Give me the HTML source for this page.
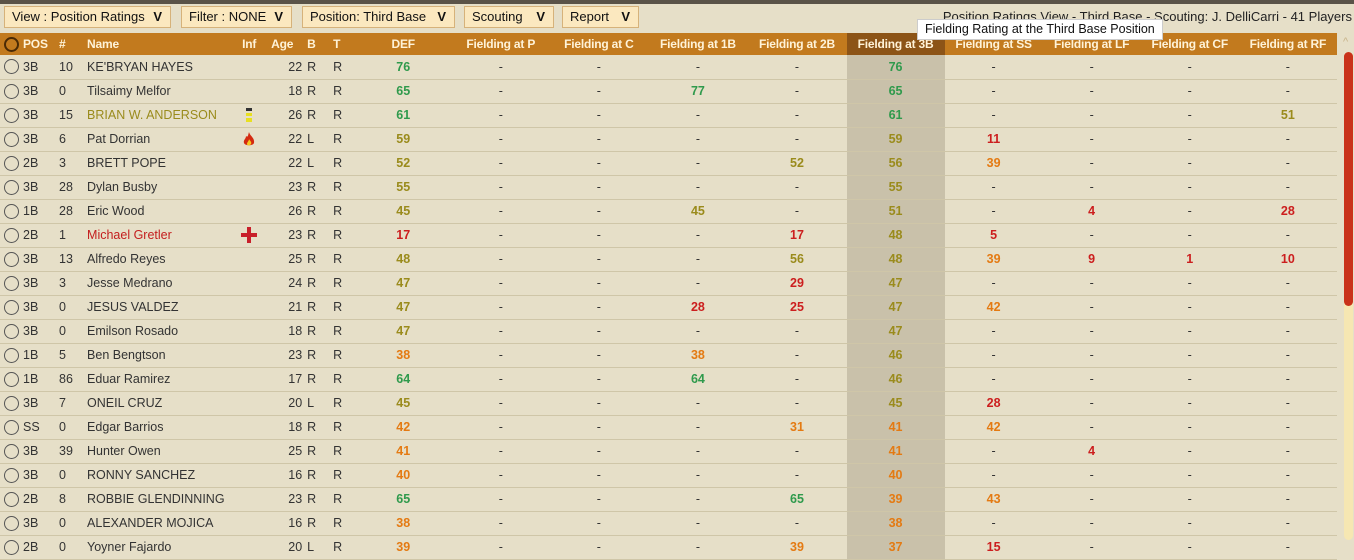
<!DOCTYPE html>
<html><head><meta charset="utf-8"><style>
*{margin:0;padding:0;box-sizing:border-box}
body{width:1354px;height:556px;overflow:hidden;background:#e6dfc8;font-family:"Liberation Sans",sans-serif;font-size:12.5px;color:#222;position:relative}
.strip{position:absolute;left:0;top:0;width:1354px;height:4px;background:#5a5348}
.btn{position:absolute;top:6px;height:22px;background:#fbe8bf;border:1px solid #d6b27a;font-size:13px;color:#111;line-height:20px;padding-left:7px;white-space:nowrap}
.btn b{position:absolute;right:8px;top:0;font-weight:bold}
.info{position:absolute;right:2px;top:9px;font-size:13px;color:#222;white-space:nowrap}
.tip{position:absolute;left:917px;top:19px;width:246px;height:21px;background:#fff;border:1px solid #ccc;font-size:12.5px;line-height:19px;padding-left:7px;color:#111;white-space:nowrap;overflow:hidden}
table{position:absolute;left:0;top:33px;border-collapse:collapse;table-layout:fixed;width:1337px}
th{height:22px;background:#c27a1e;color:#fff3d8;font-weight:bold;font-size:12px;letter-spacing:-0.2px;text-align:center;padding:0;white-space:nowrap;overflow:hidden}
th.l{text-align:left;padding-left:3px}
th.hl{background:#8c5417}
td{height:24px;padding:0;border-bottom:1px solid #cfc6a8;text-align:center;color:#333;white-space:nowrap}
td.l{text-align:left;padding-left:3px}
td.r{text-align:right;padding-right:2px}
td.hl{background:#c9c1aa}
.g{color:#2f9a4c;font-weight:bold}.o{color:#9a8b1c;font-weight:bold}.n{color:#e47a12;font-weight:bold}.x{color:#cc1e1e;font-weight:bold}
.rad{display:inline-block;width:15px;height:15px;border:1.5px solid #555;border-radius:50%;vertical-align:middle;margin-left:2px}
th .rad{border-color:#4a2a05;border-width:2px}
.scroll{position:absolute;left:1344px;top:52px;width:9px;height:488px;background:#f6e7b2;border-radius:5px}
.thumb{position:absolute;left:1344px;top:52px;width:9px;height:254px;background:#c9321a;border-radius:5px}
</style></head><body>
<div class="strip"></div>
<div class="btn" style="left:4px;width:167px">View : Position Ratings<b>V</b></div>
<div class="btn" style="left:181px;width:111px">Filter : NONE<b>V</b></div>
<div class="btn" style="left:302px;width:153px">Position: Third Base<b>V</b></div>
<div class="btn" style="left:464px;width:90px">Scouting<b>V</b></div>
<div class="btn" style="left:562px;width:77px">Report<b>V</b></div>
<div class="info">Position Ratings View - Third Base - Scouting: J. DelliCarri - 41 Players</div>
<table>
<colgroup><col style="width:20px"><col style="width:36px"><col style="width:28px"><col style="width:146px"><col style="width:38px"><col style="width:36px"><col style="width:26px"><col style="width:24px"><col style="width:98px"><col style="width:97px"><col style="width:99px"><col style="width:99px"><col style="width:99px"><col style="width:98px"><col style="width:98px"><col style="width:98px"><col style="width:98px"><col style="width:98px"></colgroup>
<tr><th><span class="rad"></span></th><th class="l">POS</th><th class="l">#</th><th class="l">Name</th><th>Inf</th><th class="l">Age</th><th class="l">B</th><th class="l">T</th><th>DEF</th><th>Fielding at P</th><th>Fielding at C</th><th>Fielding at 1B</th><th>Fielding at 2B</th><th class="hl">Fielding at 3B</th><th>Fielding at SS</th><th>Fielding at LF</th><th>Fielding at CF</th><th>Fielding at RF</th></tr>
<tr><td><span class="rad"></span></td><td class="l">3B</td><td class="l">10</td><td class="l">KE'BRYAN HAYES</td><td></td><td class="r">22</td><td class="l">R</td><td class="l">R</td><td class="g">76</td><td>-</td><td>-</td><td>-</td><td>-</td><td class="hl g">76</td><td>-</td><td>-</td><td>-</td><td>-</td></tr>
<tr><td><span class="rad"></span></td><td class="l">3B</td><td class="l">0</td><td class="l">Tilsaimy Melfor</td><td></td><td class="r">18</td><td class="l">R</td><td class="l">R</td><td class="g">65</td><td>-</td><td>-</td><td class="g">77</td><td>-</td><td class="hl g">65</td><td>-</td><td>-</td><td>-</td><td>-</td></tr>
<tr><td><span class="rad"></span></td><td class="l">3B</td><td class="l">15</td><td class="l" style="color:#9a8b1c">BRIAN W. ANDERSON</td><td><span style="display:inline-block;width:6px;height:14px;background:linear-gradient(#333 0 3px,transparent 3px 5px,#e8e020 5px 8px,transparent 8px 10px,#e8e020 10px);vertical-align:middle"></span></td><td class="r">26</td><td class="l">R</td><td class="l">R</td><td class="g">61</td><td>-</td><td>-</td><td>-</td><td>-</td><td class="hl g">61</td><td>-</td><td>-</td><td>-</td><td class="o">51</td></tr>
<tr><td><span class="rad"></span></td><td class="l">3B</td><td class="l">6</td><td class="l">Pat Dorrian</td><td><svg width="12" height="15" viewBox="0 0 12 15" style="vertical-align:middle"><path d="M6 0C7 4 12 6 11 11C10 14 2 14 1 11C0 8 3 7 3 4C5 6 5 3 6 0Z" fill="#d42a10"/><path d="M6 7C7 9 9 10 8 12C7 14 4 14 4 12C4 10 6 9 6 7Z" fill="#f5c820"/></svg></td><td class="r">22</td><td class="l">L</td><td class="l">R</td><td class="o">59</td><td>-</td><td>-</td><td>-</td><td>-</td><td class="hl o">59</td><td class="x">11</td><td>-</td><td>-</td><td>-</td></tr>
<tr><td><span class="rad"></span></td><td class="l">2B</td><td class="l">3</td><td class="l">BRETT POPE</td><td></td><td class="r">22</td><td class="l">L</td><td class="l">R</td><td class="o">52</td><td>-</td><td>-</td><td>-</td><td class="o">52</td><td class="hl o">56</td><td class="n">39</td><td>-</td><td>-</td><td>-</td></tr>
<tr><td><span class="rad"></span></td><td class="l">3B</td><td class="l">28</td><td class="l">Dylan Busby</td><td></td><td class="r">23</td><td class="l">R</td><td class="l">R</td><td class="o">55</td><td>-</td><td>-</td><td>-</td><td>-</td><td class="hl o">55</td><td>-</td><td>-</td><td>-</td><td>-</td></tr>
<tr><td><span class="rad"></span></td><td class="l">1B</td><td class="l">28</td><td class="l">Eric Wood</td><td></td><td class="r">26</td><td class="l">R</td><td class="l">R</td><td class="o">45</td><td>-</td><td>-</td><td class="o">45</td><td>-</td><td class="hl o">51</td><td>-</td><td class="x">4</td><td>-</td><td class="x">28</td></tr>
<tr><td><span class="rad"></span></td><td class="l">2B</td><td class="l">1</td><td class="l" style="color:#c41e1e">Michael Gretler</td><td><svg width="16" height="16" viewBox="0 0 16 16" style="vertical-align:middle"><path d="M6 0H10V6H16V10H10V16H6V10H0V6H6Z" fill="#c8202a"/></svg></td><td class="r">23</td><td class="l">R</td><td class="l">R</td><td class="x">17</td><td>-</td><td>-</td><td>-</td><td class="x">17</td><td class="hl o">48</td><td class="x">5</td><td>-</td><td>-</td><td>-</td></tr>
<tr><td><span class="rad"></span></td><td class="l">3B</td><td class="l">13</td><td class="l">Alfredo Reyes</td><td></td><td class="r">25</td><td class="l">R</td><td class="l">R</td><td class="o">48</td><td>-</td><td>-</td><td>-</td><td class="o">56</td><td class="hl o">48</td><td class="n">39</td><td class="x">9</td><td class="x">1</td><td class="x">10</td></tr>
<tr><td><span class="rad"></span></td><td class="l">3B</td><td class="l">3</td><td class="l">Jesse Medrano</td><td></td><td class="r">24</td><td class="l">R</td><td class="l">R</td><td class="o">47</td><td>-</td><td>-</td><td>-</td><td class="x">29</td><td class="hl o">47</td><td>-</td><td>-</td><td>-</td><td>-</td></tr>
<tr><td><span class="rad"></span></td><td class="l">3B</td><td class="l">0</td><td class="l">JESUS VALDEZ</td><td></td><td class="r">21</td><td class="l">R</td><td class="l">R</td><td class="o">47</td><td>-</td><td>-</td><td class="x">28</td><td class="x">25</td><td class="hl o">47</td><td class="n">42</td><td>-</td><td>-</td><td>-</td></tr>
<tr><td><span class="rad"></span></td><td class="l">3B</td><td class="l">0</td><td class="l">Emilson Rosado</td><td></td><td class="r">18</td><td class="l">R</td><td class="l">R</td><td class="o">47</td><td>-</td><td>-</td><td>-</td><td>-</td><td class="hl o">47</td><td>-</td><td>-</td><td>-</td><td>-</td></tr>
<tr><td><span class="rad"></span></td><td class="l">1B</td><td class="l">5</td><td class="l">Ben Bengtson</td><td></td><td class="r">23</td><td class="l">R</td><td class="l">R</td><td class="n">38</td><td>-</td><td>-</td><td class="n">38</td><td>-</td><td class="hl o">46</td><td>-</td><td>-</td><td>-</td><td>-</td></tr>
<tr><td><span class="rad"></span></td><td class="l">1B</td><td class="l">86</td><td class="l">Eduar Ramirez</td><td></td><td class="r">17</td><td class="l">R</td><td class="l">R</td><td class="g">64</td><td>-</td><td>-</td><td class="g">64</td><td>-</td><td class="hl o">46</td><td>-</td><td>-</td><td>-</td><td>-</td></tr>
<tr><td><span class="rad"></span></td><td class="l">3B</td><td class="l">7</td><td class="l">ONEIL CRUZ</td><td></td><td class="r">20</td><td class="l">L</td><td class="l">R</td><td class="o">45</td><td>-</td><td>-</td><td>-</td><td>-</td><td class="hl o">45</td><td class="x">28</td><td>-</td><td>-</td><td>-</td></tr>
<tr><td><span class="rad"></span></td><td class="l">SS</td><td class="l">0</td><td class="l">Edgar Barrios</td><td></td><td class="r">18</td><td class="l">R</td><td class="l">R</td><td class="n">42</td><td>-</td><td>-</td><td>-</td><td class="n">31</td><td class="hl n">41</td><td class="n">42</td><td>-</td><td>-</td><td>-</td></tr>
<tr><td><span class="rad"></span></td><td class="l">3B</td><td class="l">39</td><td class="l">Hunter Owen</td><td></td><td class="r">25</td><td class="l">R</td><td class="l">R</td><td class="n">41</td><td>-</td><td>-</td><td>-</td><td>-</td><td class="hl n">41</td><td>-</td><td class="x">4</td><td>-</td><td>-</td></tr>
<tr><td><span class="rad"></span></td><td class="l">3B</td><td class="l">0</td><td class="l">RONNY SANCHEZ</td><td></td><td class="r">16</td><td class="l">R</td><td class="l">R</td><td class="n">40</td><td>-</td><td>-</td><td>-</td><td>-</td><td class="hl n">40</td><td>-</td><td>-</td><td>-</td><td>-</td></tr>
<tr><td><span class="rad"></span></td><td class="l">2B</td><td class="l">8</td><td class="l">ROBBIE GLENDINNING</td><td></td><td class="r">23</td><td class="l">R</td><td class="l">R</td><td class="g">65</td><td>-</td><td>-</td><td>-</td><td class="g">65</td><td class="hl n">39</td><td class="n">43</td><td>-</td><td>-</td><td>-</td></tr>
<tr><td><span class="rad"></span></td><td class="l">3B</td><td class="l">0</td><td class="l">ALEXANDER MOJICA</td><td></td><td class="r">16</td><td class="l">R</td><td class="l">R</td><td class="n">38</td><td>-</td><td>-</td><td>-</td><td>-</td><td class="hl n">38</td><td>-</td><td>-</td><td>-</td><td>-</td></tr>
<tr><td><span class="rad"></span></td><td class="l">2B</td><td class="l">0</td><td class="l">Yoyner Fajardo</td><td></td><td class="r">20</td><td class="l">L</td><td class="l">R</td><td class="n">39</td><td>-</td><td>-</td><td>-</td><td class="n">39</td><td class="hl n">37</td><td class="x">15</td><td>-</td><td>-</td><td>-</td></tr>
</table>
<div class="tip">Fielding Rating at the Third Base Position</div>
<div class="scroll"></div><div class="thumb"></div>
<div style="position:absolute;left:1343px;top:36px;font-size:11px;color:#c8b48a">^</div>
</body></html>
